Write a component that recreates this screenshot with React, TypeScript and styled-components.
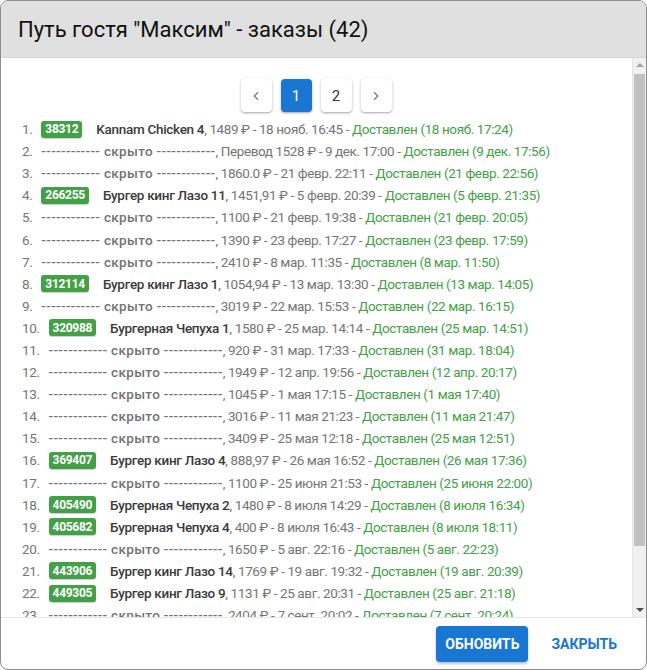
import styled, { createGlobalStyle } from 'styled-components'

const GlobalStyle = createGlobalStyle`
	html, body {
		margin: 0;
		padding: 0;
		background: #ffffff;
	}
	* {
		box-sizing: border-box;
	}
`

type Order = {
	code?: string
	name?: string
	info: string
	status: string
}

const orders: Order[] = [
	{ code: '38312', name: 'Kannam Chicken 4', info: '1489 ₽ - 18 нояб. 16:45', status: '18 нояб. 17:24' },
	{ info: 'Перевод 1528 ₽ - 9 дек. 17:00', status: '9 дек. 17:56' },
	{ info: '1860.0 ₽ - 21 февр. 22:11', status: '21 февр. 22:56' },
	{ code: '266255', name: 'Бургер кинг Лазо 11', info: '1451,91 ₽ - 5 февр. 20:39', status: '5 февр. 21:35' },
	{ info: '1100 ₽ - 21 февр. 19:38', status: '21 февр. 20:05' },
	{ info: '1390 ₽ - 23 февр. 17:27', status: '23 февр. 17:59' },
	{ info: '2410 ₽ - 8 мар. 11:35', status: '8 мар. 11:50' },
	{ code: '312114', name: 'Бургер кинг Лазо 1', info: '1054,94 ₽ - 13 мар. 13:30', status: '13 мар. 14:05' },
	{ info: '3019 ₽ - 22 мар. 15:53', status: '22 мар. 16:15' },
	{ code: '320988', name: 'Бургерная Чепуха 1', info: '1580 ₽ - 25 мар. 14:14', status: '25 мар. 14:51' },
	{ info: '920 ₽ - 31 мар. 17:33', status: '31 мар. 18:04' },
	{ info: '1949 ₽ - 12 апр. 19:56', status: '12 апр. 20:17' },
	{ info: '1045 ₽ - 1 мая 17:15', status: '1 мая 17:40' },
	{ info: '3016 ₽ - 11 мая 21:23', status: '11 мая 21:47' },
	{ info: '3409 ₽ - 25 мая 12:18', status: '25 мая 12:51' },
	{ code: '369407', name: 'Бургер кинг Лазо 4', info: '888,97 ₽ - 26 мая 16:52', status: '26 мая 17:36' },
	{ info: '1100 ₽ - 25 июня 21:53', status: '25 июня 22:00' },
	{ code: '405490', name: 'Бургерная Чепуха 2', info: '1480 ₽ - 8 июля 14:29', status: '8 июля 16:34' },
	{ code: '405682', name: 'Бургерная Чепуха 4', info: '400 ₽ - 8 июля 16:43', status: '8 июля 18:11' },
	{ info: '1650 ₽ - 5 авг. 22:16', status: '5 авг. 22:23' },
	{ code: '443906', name: 'Бургер кинг Лазо 14', info: '1769 ₽ - 19 авг. 19:32', status: '19 авг. 20:39' },
	{ code: '449305', name: 'Бургер кинг Лазо 9', info: '1131 ₽ - 25 авг. 20:31', status: '25 авг. 21:18' },
	{ info: '2404 ₽ - 7 сент. 20:02', status: '7 сент. 20:24' },
	{ info: '1320 ₽ - 14 сент. 19:10', status: '14 сент. 19:48' },
	{ info: '2150 ₽ - 21 сент. 18:05', status: '21 сент. 18:40' },
]

const Dialog = styled.div`
	width: 647px;
	height: 670px;
	display: flex;
	flex-direction: column;
	border: 1px solid #8c8c8c;
	border-radius: 8px;
	overflow: hidden;
	background: #ffffff;
	font-family: Roboto, 'Liberation Sans', sans-serif;
`
const Header = styled.div`
	height: 57px;
	flex-shrink: 0;
	display: flex;
	align-items: center;
	padding: 0 17px;
	background: #e0e0e0;
	border-bottom: 1px solid #d6d6d6;
`
const Title = styled.h2`
	margin: 0;
	font-size: 22px;
	font-weight: 400;
	color: #111111;
`
const Body = styled.div`
	flex: 1;
	min-height: 0;
	display: flex;
`
const Content = styled.div`
	flex: 1;
	overflow: hidden;
	padding: 21px 0 12px 21px;
`
// drawn scrollbar (headless page hides the native one)
const ScrollBar = styled.div`
	width: 14px;
	flex-shrink: 0;
	display: flex;
	flex-direction: column;
	background: #f1f1f1;
	border-left: 1px solid #e4e4e4;
`
const ScrollArrow = styled.div<{ $down?: boolean }>`
	height: 14px;
	display: flex;
	align-items: center;
	justify-content: center;
	&::before {
		content: '';
		border-left: 4px solid transparent;
		border-right: 4px solid transparent;
		${({ $down }) => ($down ? 'border-top: 4px solid #505050;' : 'border-bottom: 4px solid #a3a3a3;')}
	}
`
const ScrollTrack = styled.div`
	flex: 1;
	padding: 2px 1px 0 1px;
`
const ScrollThumb = styled.div`
	height: 472px;
	background: #c1c1c1;
`
const Pagination = styled.div`
	display: flex;
	justify-content: center;
	gap: 9px;
	padding-right: 22px;
	margin-bottom: 6px;
`
const PageButton = styled.button<{ $active?: boolean }>`
	width: 31px;
	height: 33px;
	display: flex;
	align-items: center;
	justify-content: center;
	padding: 0;
	border: none;
	border-radius: 4px;
	font-family: inherit;
	font-size: 15px;
	background: ${({ $active }) => ($active ? '#1976d2' : '#ffffff')};
	color: ${({ $active }) => ($active ? '#ffffff' : '#333333')};
	box-shadow: 0 1px 3px rgba(0, 0, 0, 0.25), 0 1px 1px rgba(0, 0, 0, 0.12);
`
const List = styled.div`
	display: flex;
	flex-direction: column;
`
const Row = styled.div`
	display: flex;
	align-items: center;
	height: 22.1px;
	font-size: 13.5px;
	letter-spacing: -0.4px;
	white-space: nowrap;
	color: #757575;
`
const Num = styled.span`
	margin-right: 9px;
	color: #757575;
`
const Badge = styled.span`
	display: inline-flex;
	align-items: center;
	height: 17px;
	padding: 0 4px;
	margin-right: 14px;
	border-radius: 3px;
	background: #43a047;
	color: #ffffff;
	font-size: 12px;
	font-weight: 700;
	letter-spacing: -0.3px;
	box-shadow: 0 1px 1px rgba(0, 0, 0, 0.2);
`
const Name = styled.span<{ $hidden?: boolean }>`
	font-weight: 500;
	white-space: pre;
	color: ${({ $hidden }) => ($hidden ? '#727272' : '#3a3a3a')};
	letter-spacing: ${({ $hidden }) => ($hidden ? '0.32px' : '-0.3px')};
`
const Status = styled.span`
	color: #43a047;
	white-space: pre;
`
const Info = styled.span`
	white-space: pre;
`
const Footer = styled.div`
	height: 52px;
	flex-shrink: 0;
	display: flex;
	align-items: center;
	justify-content: flex-end;
	gap: 14px;
	padding: 0 20px 0 0;
	border-top: 1px solid #e6e6e6;
`
const Action = styled.button<{ $primary?: boolean }>`
	height: 36px;
	padding: 0 9px;
	border: none;
	border-radius: 4px;
	font-family: inherit;
	font-size: 14px;
	font-weight: 700;
	text-transform: uppercase;
	background: ${({ $primary }) => ($primary ? '#1976d2' : 'transparent')};
	color: ${({ $primary }) => ($primary ? '#ffffff' : '#1976d2')};
	box-shadow: ${({ $primary }) => ($primary ? '0 2px 3px rgba(0, 0, 0, 0.25)' : 'none')};
`

const Chevron = ({ dir }: { dir: 'left' | 'right' }) => (
	<svg width='14' height='14' viewBox='0 0 24 24' fill='none' stroke='#757575' strokeWidth='2' strokeLinecap='round' strokeLinejoin='round'>
		{dir === 'left' ? <path d='M15 6l-6 6 6 6' /> : <path d='M9 6l6 6-6 6' />}
	</svg>
)

const dashes = '------------'

const App: React.FC = () => {
	return (
		<>
			<GlobalStyle />
			<Dialog>
				<Header>
					<Title>Путь гостя "Максим" - заказы (42)</Title>
				</Header>
				<Body>
					<Content>
						<Pagination>
							<PageButton>
								<Chevron dir='left' />
							</PageButton>
							<PageButton $active>1</PageButton>
							<PageButton>2</PageButton>
							<PageButton>
								<Chevron dir='right' />
							</PageButton>
						</Pagination>
						<List>
							{orders.map((o, i) => (
								<Row key={i}>
									<Num>{i + 1}.</Num>
									{o.code && <Badge>{o.code}</Badge>}
									{o.name ? <Name>{o.name}</Name> : <Name $hidden>{`${dashes} скрыто ${dashes}`}</Name>}
									<Info>{`, ${o.info} - `}</Info>
									<Status>{`Доставлен (${o.status})`}</Status>
								</Row>
							))}
						</List>
					</Content>
					<ScrollBar>
						<ScrollArrow />
						<ScrollTrack>
							<ScrollThumb />
						</ScrollTrack>
						<ScrollArrow $down />
					</ScrollBar>
				</Body>
				<Footer>
					<Action $primary>Обновить</Action>
					<Action>Закрыть</Action>
				</Footer>
			</Dialog>
		</>
	)
}
export default App
